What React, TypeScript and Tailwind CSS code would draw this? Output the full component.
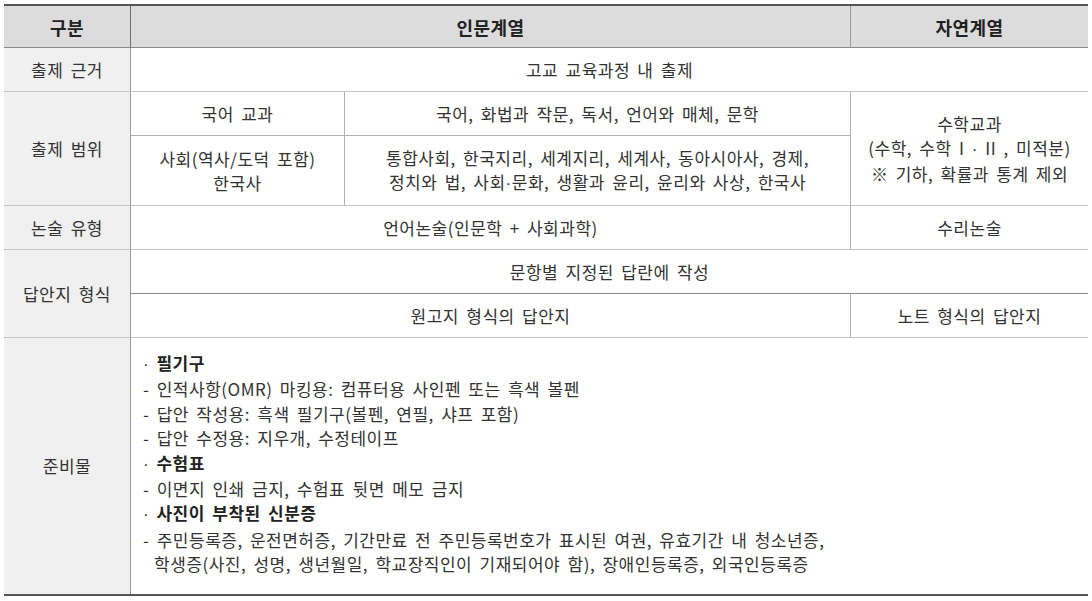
import React from "react";

function Dot() {
  return <span className="font-['Liberation_Sans'] [word-spacing:0px]">·</span>;
}

export default function App() {
  const cell = "flex items-center justify-center text-center border-b border-[#c4c4c4]";
  const side = "flex items-center justify-center text-center border-b border-r border-[#c4c4c4] border-r-[#9a9a9a] bg-[#f0f0f0]";
  const head = "flex items-center justify-center bg-[#dcdcdc] border-b border-b-[#8a8a8a] font-bold text-[18px] text-[#222]";
  return (
    <div className="w-[1092px] h-[601px] bg-white pt-[4px] pl-[4px] font-['Noto_Sans_CJK_KR',_'Noto_Sans',_sans-serif]">
      <div className="w-[1084px] border-t-2 border-b-2 border-t-[#555] border-b-[#555] text-[17px] text-[#333] leading-[24px] tracking-[0.5px] [word-spacing:3px] grid grid-cols-[127px_214px_506px_237px] grid-rows-[42px_44px_44px_70px_44px_44px_44px_256px]">
        <div className={`col-start-1 row-start-1 ${head} border-r border-r-[#707070]`}>구분</div>
        <div className={`col-start-2 col-span-2 row-start-1 ${head} border-r border-r-[#9a9a9a]`}>인문계열</div>
        <div className={`col-start-4 row-start-1 ${head}`}>자연계열</div>

        <div className={`col-start-1 row-start-2 ${side}`}>출제 근거</div>
        <div className={`col-start-2 col-span-3 row-start-2 ${cell}`}>고교 교육과정 내 출제</div>

        <div className={`col-start-1 row-start-3 row-span-2 ${side}`}>출제 범위</div>
        <div className={`col-start-2 row-start-3 ${cell} border-r border-r-[#b0b0b0] border-b-[#b0b0b0]`}>국어 교과</div>
        <div className={`col-start-3 row-start-3 ${cell} border-r border-r-[#b0b0b0] border-b-[#b0b0b0]`}>국어, 화법과 작문, 독서, 언어와 매체, 문학</div>
        <div className={`col-start-4 row-start-3 row-span-2 ${cell} flex-col`}>
          <div>수학교과</div>
          <div>(수학, 수학 I <Dot /> II , 미적분)</div>
          <div>※ 기하, 확률과 통계 제외</div>
        </div>
        <div className={`col-start-2 row-start-4 ${cell} border-r border-r-[#b0b0b0] flex-col`}>
          <div>사회(역사/도덕 포함)</div>
          <div>한국사</div>
        </div>
        <div className={`col-start-3 row-start-4 ${cell} border-r border-r-[#b0b0b0] flex-col`}>
          <div>통합사회, 한국지리, 세계지리, 세계사, 동아시아사, 경제,</div>
          <div>정치와 법, 사회<Dot />문화, 생활과 윤리, 윤리와 사상, 한국사</div>
        </div>

        <div className={`col-start-1 row-start-5 ${side}`}>논술 유형</div>
        <div className={`col-start-2 col-span-2 row-start-5 ${cell} border-r border-r-[#b0b0b0]`}>언어논술(인문학 + 사회과학)</div>
        <div className={`col-start-4 row-start-5 ${cell}`}>수리논술</div>

        <div className={`col-start-1 row-start-6 row-span-2 ${side}`}>답안지 형식</div>
        <div className={`col-start-2 col-span-3 row-start-6 ${cell} border-b-[#8a8a8a]`}>문항별 지정된 답란에 작성</div>
        <div className={`col-start-2 col-span-2 row-start-7 ${cell} border-r border-r-[#b0b0b0]`}>원고지 형식의 답안지</div>
        <div className={`col-start-4 row-start-7 ${cell}`}>노트 형식의 답안지</div>

        <div className="col-start-1 row-start-8 flex items-center justify-center border-r border-r-[#9a9a9a] bg-[#f0f0f0]">준비물</div>
        <div className="col-start-2 col-span-3 row-start-8 flex flex-col justify-start pt-[13px] pl-[12px] leading-[24.4px]">
          <div><Dot /> <span className="font-bold text-[#222]">필기구</span></div>
          <div>- 인적사항(OMR) 마킹용: 컴퓨터용 사인펜 또는 흑색 볼펜</div>
          <div>- 답안 작성용: 흑색 필기구(볼펜, 연필, 샤프 포함)</div>
          <div>- 답안 수정용: 지우개, 수정테이프</div>
          <div><Dot /> <span className="font-bold text-[#222]">수험표</span></div>
          <div>- 이면지 인쇄 금지, 수험표 뒷면 메모 금지</div>
          <div><Dot /> <span className="font-bold text-[#222]">사진이 부착된 신분증</span></div>
          <div>- 주민등록증, 운전면허증, 기간만료 전 주민등록번호가 표시된 여권, 유효기간 내 청소년증,</div>
          <div className="pl-[11px]">학생증(사진, 성명, 생년월일, 학교장직인이 기재되어야 함), 장애인등록증, 외국인등록증</div>
        </div>
      </div>
    </div>
  );
}
